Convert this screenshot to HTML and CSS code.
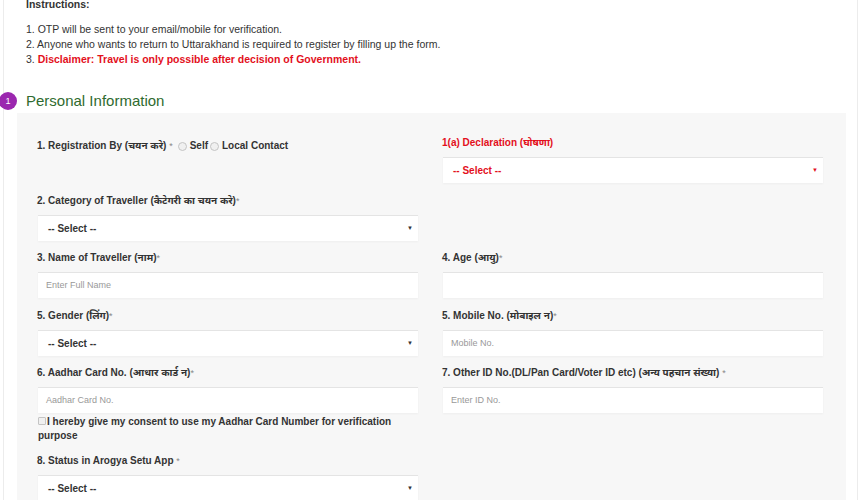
FILE: index.html
```html
<!DOCTYPE html>
<html>
	<head>
		<meta charset="utf-8">
		<title>Registration</title>
		<link rel="stylesheet" href="styles.css">
	</head>
	<body>
		<div class="page">
			<div class="instructions">
				<p class="ins-title">Instructions:</p>
				<p>1. OTP will be sent to your email/mobile for verification.</p>
				<p>2. Anyone who wants to return to Uttarakhand is required to register by filling up the form.</p>
				<p>3. <b class="red">Disclaimer: Travel is only possible after decision of Government.</b></p>
			</div>

			<div class="step">
				<span class="step-num">1</span>
				<h2>Personal Information</h2>
			</div>

			<div class="panel">
				<div class="grid">
					<div class="field reg">
						<label>1. Registration By (चयन करे) <i>*</i></label>
						<span class="radio"></span><b>Self</b><span class="radio"></span><b>Local Contact</b>
					</div>
					<div class="field">
						<label class="red">1(a) Declaration (घोषणा)</label>
						<div class="select red">-- Select --</div>
					</div>

					<div class="field">
						<label>2. Category of Traveller (कैटेगरी का चयन करे)<i>*</i></label>
						<div class="select">-- Select --</div>
					</div>
					<div></div>

					<div class="field">
						<label>3. Name of Traveller (नाम)<i>*</i></label>
						<div class="input">Enter Full Name</div>
					</div>
					<div class="field">
						<label>4. Age (आयु)<i>*</i></label>
						<div class="input"></div>
					</div>

					<div class="field">
						<label>5. Gender (लिंग)<i>*</i></label>
						<div class="select">-- Select --</div>
					</div>
					<div class="field">
						<label>5. Mobile No. (मोबाइल न)<i>*</i></label>
						<div class="input">Mobile No.</div>
					</div>

					<div class="field">
						<label>6. Aadhar Card No. (आधार कार्ड न)<i>*</i></label>
						<div class="input">Aadhar Card No.</div>
						<p class="consent"><span class="check"></span>I hereby give my consent to use my Aadhar Card Number for verification purpose</p>
					</div>
					<div class="field">
						<label>7. Other ID No.(DL/Pan Card/Voter ID etc) (अन्य पहचान संख्या) <i>*</i></label>
						<div class="input">Enter ID No.</div>
					</div>

					<div class="field">
						<label>8. Status in Arogya Setu App <i>*</i></label>
						<div class="select">-- Select --</div>
					</div>
					<div></div>
				</div>
			</div>
		</div>
	</body>
</html>
```

FILE: styles.css
```css
*{
	padding: 0;
	margin: 0;
	box-sizing: border-box;
}
body{
	background: #fff;
	font-family: "Liberation Sans", Arial, "Noto Sans", sans-serif;
	color: #333;
	overflow: hidden;
}
.page{
	width: 855px;
	margin-left: 3px;
	border-left: 1px solid #ececec;
	border-right: 1px solid #ececec;
	min-height: 500px;
}
.red{
	color: #e3101c;
}
.instructions{
	padding-left: 22px;
	margin-top: -3px;
	font-size: 10.5px;
	line-height: 15px;
	color: #333;
}
.ins-title{
	font-weight: bold;
	margin-bottom: 10px;
}
.step{
	position: relative;
	padding-left: 22px;
	margin-top: 25px;
	height: 21px;
}
.step h2{
	font-weight: normal;
	font-size: 15px;
	line-height: 17px;
	color: #2f6b2f;
}
.step-num{
	position: absolute;
	left: -5px;
	top: 0;
	width: 18px;
	height: 18px;
	border-radius: 50%;
	background: #9b27af;
	color: #fff;
	font-size: 9px;
	line-height: 18px;
	text-align: center;
}
.panel{
	margin: 0 11px 0 13px;
	background: #f7f7f7;
	padding: 23px 23px 0 21px;
	min-height: 400px;
}
.grid{
	display: grid;
	grid-template-columns: 380px 380px;
	column-gap: 25px;
	row-gap: 10.5px;
}
.field label{
	display: block;
	font-size: 10px;
	font-weight: bold;
	line-height: 14px;
	margin-left: -1px;
	margin-bottom: 7px;
}
.field label i{
	font-style: normal;
	font-weight: normal;
	font-size: 9px;
	vertical-align: top;
	color: #888;
}
.field.reg{
	display: flex;
	align-items: center;
	font-size: 10px;
	line-height: 14px;
	margin-top: 3px;
	align-self: start;
}
.field.reg label{
	margin-bottom: 0;
	margin-right: 3px;
}
.radio{
	width: 9px;
	height: 9px;
	border-radius: 50%;
	border: 1px solid #c4c4c4;
	background: #f0f0f0;
	margin: 0 3px 0 2px;
}
.select,.input{
	height: 26px;
	background: #fff;
	border-top: 1px solid #e4e4e4;
	box-shadow: 0 1px 2px rgba(0,0,0,0.04);
	font-size: 10px;
	line-height: 25px;
}
.select{
	position: relative;
	font-weight: bold;
	padding-left: 10px;
}
.select:after{
	content: '▼';
	position: absolute;
	right: 5px;
	top: 0;
	font-size: 6px;
	color: #333;
}
.select.red:after{
	color: #e3101c;
}
.input{
	padding-left: 8px;
	color: #999;
	font-size: 9px;
}
.consent{
	margin-top: 2px;
	font-size: 10px;
	font-weight: bold;
	line-height: 14px;
}
.check{
	display: inline-block;
	width: 8px;
	height: 8px;
	border: 1px solid #c4c4c4;
	background: #f0f0f0;
	border-radius: 1px;
	margin-right: 1px;
}
```
